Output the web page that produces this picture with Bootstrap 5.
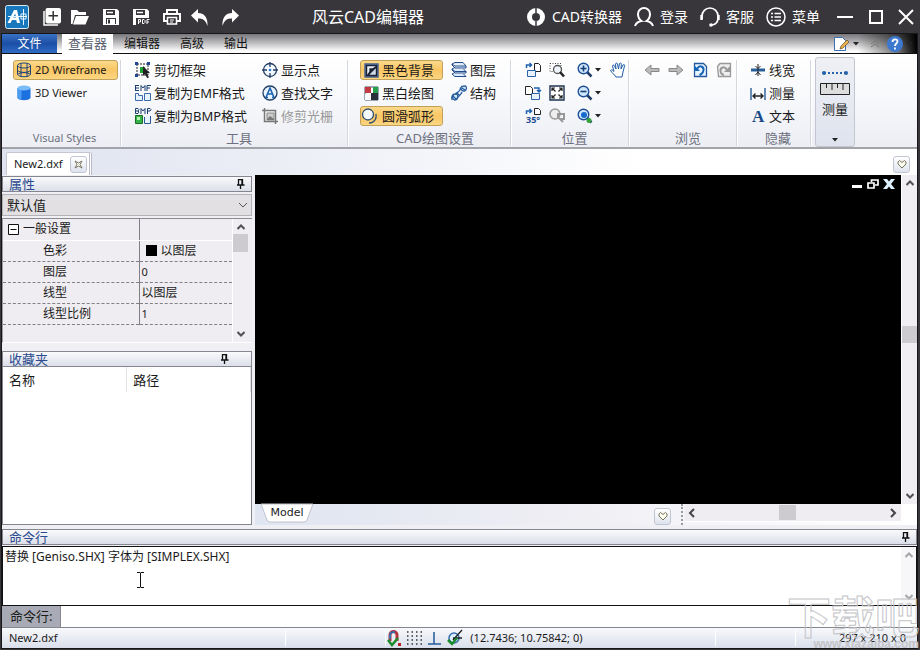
<!DOCTYPE html>
<html lang="zh-CN">
<head>
<meta charset="utf-8">
<meta name="viewport" content="width=device-width, initial-scale=1">
<title>风云CAD编辑器</title>
<link href="https://cdn.jsdelivr.net/npm/bootstrap@5.3.0/dist/css/bootstrap.min.css" rel="stylesheet">
<style>
body{font-family:"Noto Sans","Noto Sans CJK SC",sans-serif;font-size:12px;line-height:16px;color:#1b1b1b;background:#38363b}
button{font:inherit;color:inherit;background:none;border:0;padding:0;display:flex;align-items:center;white-space:nowrap}
svg{display:block;flex:none;overflow:visible}
.i16{width:16px;height:16px}
.titlebar{height:34px;background:#38363b;color:#fff;font-size:14px;flex:none}
.titlebar .app-name{font-size:16px;line-height:20px;margin-right:29px}
.tool-icons{gap:10px;padding-left:5px}
.account{gap:12px}
.account a{gap:6px;color:#fff;text-decoration:none;line-height:20px;display:flex;align-items:center}
.win{gap:12px;padding-left:17px;padding-right:7px}
.frame{margin:0 3px 2px 2px;background:#f0eff3;outline:1px solid #17171a;min-height:0}
.menu-row{height:20px;background:linear-gradient(#77767a,#fdfdfd 90%);border-bottom:1px solid #111;flex:none}
.menu-row a{color:#111;text-decoration:none;font-size:12px;line-height:20px;display:block}
.menu-row .adv{margin-left:20px}
.menu-row .file-tab{width:55px;background:linear-gradient(#3a72c4,#1c4fa6 50%,#2f6cc5);color:#fff;text-align:center;height:19px;margin-right:5px}
.menu-row .cur{background:#fff;color:#5a5f70;width:51px;text-align:center;height:20px;line-height:19px;font-size:13px;margin-right:11px}
.menu-end{background:linear-gradient(90deg,transparent 55%,#0008 85%,#000)}
.ribbon{background:linear-gradient(#fff,#f7f8fb 50%,#eceef4);border-bottom:2px solid #a3a3aa;height:95px;flex:none;font-size:13px;padding-top:6px}
.grp{border-right:1px solid #d5d7df;box-shadow:1px 0 #fff;flex:none;display:flex;flex-direction:column;height:86px}
.grp-name{margin-top:auto;text-align:center;color:#6d7080;line-height:16px}
.latin,.grp-name.latin{font-size:11px}
.grp-body{display:flex}
.stack{display:flex;flex-direction:column;gap:3px}
.cmd{height:20px;gap:3px;padding:0 3px;border:1px solid transparent;border-radius:3px;line-height:18px}
.cmd.on{background:linear-gradient(#fbd98a,#f9c664 50%,#fcd681);border-color:#c2a05a}
.cmd.off{color:#999}
.wide{width:105px}
.g1{width:119px;padding-left:11px}.g1 .grp-name{margin-right:4px}.g1 .cmd{padding:0 2px}
.g2{width:227px;padding-left:10px}.g2 .stack:first-child{width:127px}
.g3{width:163px;padding-left:12px}
.g4{width:118px;padding-left:10px}
.g4 .cmd{gap:2px}
.g5{width:108px;padding-left:11px}
.g6{width:74px;padding-left:9px}
.measure{width:40px;height:90px;margin:-3px 0 0 4px;background:linear-gradient(#eef0f5,#dfe3ee);border:1px solid #c3c6d0;border-radius:3px;flex-direction:column;padding-top:12px;gap:6px;flex:none}
.docs{height:26px;flex:none;background:linear-gradient(90deg,#dfe3ef,#eef0f7 35%,#fff 70%);padding:3px 7px 0 4px}
.doc-tab{background:#fff;border:1px solid #c4c7d2;border-bottom:0;padding:0 2px 0 7px;border-radius:2px 2px 0 0;width:86px;border-right:3px double #b9bcc8;font-size:11px}
.small-btn{width:17px;height:17px;border:1px solid #c2c6d3;border-radius:3px;background:linear-gradient(#fff,#dde3ee);justify-content:center}
.side{width:250px;flex:none;padding-top:1px}
.pane-head{height:16px;border:1px solid #85868f;background:linear-gradient(#fafafc,#dcdfe9);color:#2a4b8d;line-height:14px;font-size:13px;padding:0 6px;display:flex;align-items:center;justify-content:space-between;flex:none}
.pane-head h2{font:inherit;margin:0}
.default-box{position:relative;height:22px;margin:2px 0;flex:none}
.default-box select{appearance:none;width:100%;height:22px;border:1px solid #b3b3b7;background:#e2e0e3;font-size:13px;line-height:18px;padding:0 4px;color:#1b1b1b;border-radius:0}
.default-box svg{position:absolute;right:4px;top:8px}
.props{height:125px;flex:none;border-left:1px solid #9b9ba0;border-top:1px solid #8a8a90;background:#efedf1;border-bottom:1px solid #fff}
.props table{width:100%;border-collapse:collapse;table-layout:fixed}
.props td,.props th{height:21px;padding:0 0 0 2px;font-weight:400;line-height:18px}
.props th{width:136px;border-right:1px solid #808086;padding-left:40px}
.props tr+tr td,.props tr+tr th{border-bottom:1px dashed #808086}
.props tr:first-child th,.props tr:first-child td{border-bottom:1px solid #fff}
.props tr:first-child th{padding-left:5px}
.vbar{width:16px;background:#f0eef2;flex:none;display:flex;flex-direction:column;align-items:center;padding:5px 0;border-left:1px solid #fff;color:#505055}
.thumb{background:#cdcbd0}
.thumb.side-t{width:15px;height:18px}
.thumb.doc-t{width:15px;height:17px;margin-bottom:11px}
.thumb.sheet-t{width:17px;height:15px;margin-right:10px}
.fav{flex:1;background:#fff;border:1px solid #85868f;border-top:0;min-height:0}
.fav table{width:100%;table-layout:fixed;font-size:13px}
.fav th{font-weight:400;height:25px;padding:0 6px;border-right:1px solid #e2e2e6}
.work{min-height:0}
.doc-area{margin-left:3px;min-width:0}
.canvas-area{background:#000;color:#fff}
.canvas-ctl{gap:4px;padding:4px 6px}
.sheet-row{height:21px;flex:none;background:linear-gradient(90deg,#dfe5f1,#f0eff4 50%,#fff);padding-right:16px}
.model{font-family:"DejaVu Sans",sans-serif;font-size:11px;width:52px;height:18px;position:relative;justify-content:center;margin-left:6px;line-height:16px}
.model svg{position:absolute;left:0;top:0}
.model span{position:relative}
.hbar{width:216px;height:18px;background:#efedf1;padding:0 4px 0 3px;border-bottom:1px solid #fff}
.grip{border-left:2px dotted #9a9aa2;margin:0 2px 0 10px;height:21px}
.log{height:60px;border:1px solid #111;background:#fff;flex:none;position:relative;margin-top:1px}
.log p{margin:0;padding:1px 2px;line-height:18px}
.ibeam{position:absolute;left:134px;top:25px}
.cmdline{height:22px;flex:none;background:#fff;border-bottom:1px solid #85868f}
.cmdline label{background:#a8abb5;width:59px;line-height:21px;padding-left:8px;font-size:13px;border-right:1px solid #85868f}
.cmdline input{border:0;flex:1;min-width:0;outline:0;padding:0 4px}
.status{height:20px;flex:none;background:linear-gradient(#f8f9fb,#d9dfeb);font-size:11px;padding:0 11px 0 7px}
.status .cell{border-left:1px solid #fff;height:16px}
.c1{flex:277 1 0}.c2{flex:100 1 0}.c3{flex:330 1 0}.c4{flex:80 1 0}.c5{flex:110 1 0}
.watermark{position:absolute;right:1px;bottom:0;text-align:right;pointer-events:none;color:transparent;width:136px}
.watermark b{display:block;font-size:44px;line-height:46px;font-weight:700;-webkit-text-stroke:1px #c4c4c8;font-family:"Noto Sans CJK SC",sans-serif;white-space:nowrap}
.watermark i{display:block;font-style:normal;font-weight:700;font-family:"Liberation Sans",sans-serif;font-size:12px;line-height:12px;color:#c4c4c8}
</style>
<script src="https://cdn.jsdelivr.net/npm/bootstrap@5.3.0/dist/js/bootstrap.bundle.min.js"></script>
</head>
<body class="vh-100 d-flex flex-column overflow-hidden position-relative">
<svg width="0" height="0" class="position-absolute">
<defs>
<symbol id="pin" viewBox="0 0 8 10"><path d="M1.500 5.500V.5h4v5M5 0v6M0 6h7.500M3.500 6v4" fill="none" stroke="#111" stroke-width="1.300"/></symbol>
<symbol id="up" viewBox="0 0 8 6"><path d="M.5 5 4 1.500 7.500 5" fill="none" stroke="currentColor" stroke-width="2"/></symbol>
<symbol id="down" viewBox="0 0 8 6"><path d="M.5 1 4 4.500 7.500 1" fill="none" stroke="currentColor" stroke-width="2"/></symbol>
<symbol id="heart" viewBox="0 0 10 9"><path d="M5 8 1 4V2l1.500-1.500L5 2.500 7.500.5 9 2v2z" fill="#fffef2" stroke="#77755c"/></symbol>
<symbol id="caret" viewBox="0 0 6 4"><path d="M0 0h6L3 3.500z" fill="#222"/></symbol>
<symbol id="lens" viewBox="0 0 16 16"><path d="m10 10 4.500 4.500" stroke="#1f3b66" stroke-width="2.500"/><circle cx="6.500" cy="6.500" r="5.300" fill="#cfe6fb" stroke="#1e4f96" stroke-width="1.400"/></symbol>
</defs>
</svg>

<header class="titlebar d-flex align-items-center justify-content-between">
  <div class="tool-icons d-flex align-items-center">
    <svg width="24" height="24" viewBox="0 0 24 24"><rect x=".5" y=".5" width="23" height="23" rx="2" fill="#1878bd" stroke="#d7edfa"/><path fill-rule="evenodd" d="M2.500 18 9 5h3l3 13h-3l-.7-3H7l-1.500 3zM8 12.500h3l-.8-4z" fill="#fff"/><path d="M3 11.500h19M18.500 4v16M16 9h5v5h-5z" fill="none" stroke="#e6f6ff"/></svg>
    <button type="button" aria-label="新建" class="ms-1"><svg width="18" height="18" viewBox="0 0 18 18"><path d="M1 3v14h14" fill="none" stroke="#fff" stroke-width="1.500"/><rect x="2.500" y="0" width="15.500" height="15.500" rx="2" fill="#fff"/><path d="M10.200 3v9.500M5.500 7.700H15" stroke="#333" stroke-width="1.500"/></svg></button>
    <button type="button" aria-label="打开"><svg width="18" height="16" viewBox="0 0 18 16"><path d="M0 15V1h6l2 2h7v3H4L1.500 15z" fill="#fff"/><path d="M5 7h13l-3.500 8.500H2z" fill="#fff"/></svg></button>
    <button type="button" aria-label="保存" class="ms-1"><svg class="i16" viewBox="0 0 16 16"><path d="M0 0h14l2 2v14H0z" fill="#fff"/><path d="M3 1h9v5H3zM3 9h10v6H3z" fill="#38363b"/><path d="M4 3.500h6" stroke="#fff" stroke-width="1.500"/><path d="M4 10h8v5H4z" fill="#fff"/><path d="M6 10.500v4" stroke="#38363b" stroke-width="2"/></svg></button>
    <button type="button" aria-label="导出PDF" class="ms-1"><svg class="i16" viewBox="0 0 16 16"><path d="M0 0h14l2 2v14H0z" fill="#fff"/><path d="M3 1h9v5H3zM3 9h13v7H3z" fill="#38363b"/><path d="M4 3.500h6" stroke="#fff" stroke-width="1.500"/><path d="M5.500 15v-4.500h2v2.500h-2M9.500 14.500v-4h1.500l1 1v2l-1 1zM14 15v-4.500h2.500M14 13h2" fill="none" stroke="#fff"/></svg></button>
    <button type="button" aria-label="打印" class="ms-1"><svg width="18" height="16" viewBox="0 0 18 16"><path d="M4 4V1h10v3M4 12H1V5h16v7h-3" fill="none" stroke="#fff" stroke-width="2"/><path d="M4.500 8.500h9v6.500h-9z" fill="#38363b" stroke="#fff" stroke-width="1.500"/><path d="M7 11h4M7 13h3" stroke="#fff"/></svg></button>
    <button type="button" aria-label="撤销"><svg width="17" height="17" viewBox="0 0 17 17"><path d="M0 6.500 7 0v4c6 0 10 4 9.500 13C14.500 11 12 9.500 7 9.500v4z" fill="#fff"/></svg></button>
    <button type="button" aria-label="重做" class="ms-1"><svg width="17" height="17" viewBox="0 0 17 17"><path d="M17 6.500 10 0v4C4 4 0 8 .5 17 2.500 11 5 9.500 10 9.500v4z" fill="#fff"/></svg></button>
  </div>
  <div class="app-name">风云CAD编辑器</div>
  <div class="d-flex align-items-center">
    <nav class="account d-flex">
      <a href="#"><svg width="20" height="20" viewBox="0 0 20 20"><circle cx="10" cy="10" r="6.500" fill="none" stroke="#fff" stroke-width="5"/><path d="M10 0v6M10 14v6" stroke="#38363b" stroke-width="1.500"/></svg>CAD转换器</a>
      <a href="#"><svg width="20" height="20" viewBox="0 0 20 20"><path d="M1 19c1-3 3-4.500 6.500-5C4.500 12 4 9.500 4 7a6 6 0 0 1 12 0c0 2.500-.5 5-3.500 7 3.500.5 5.500 2 6.500 5" fill="none" stroke="#fff" stroke-width="2"/></svg>登录</a>
      <a href="#"><svg width="20" height="20" viewBox="0 0 20 20"><path d="M2 12V9a8 8 0 0 1 16 0v3M18 11c0 4-2 6.500-6 7" fill="none" stroke="#fff" stroke-width="1.700"/><path d="M1.500 8v5M18.500 8v5" stroke="#fff" stroke-width="2.500"/><circle cx="11" cy="18" r="1.800" fill="#fff"/></svg>客服</a>
      <a href="#"><svg width="20" height="20" viewBox="0 0 20 20"><circle cx="10" cy="10" r="9" fill="none" stroke="#fff" stroke-width="1.500"/><path d="M5 6.500h2M5 10h2M5 13.500h2M8.500 6.500H15M8.500 10H15M8.500 13.500H15" stroke="#fff" stroke-width="1.600"/></svg>菜单</a>
    </nav>
    <div class="win d-flex align-items-center">
      <button type="button" aria-label="最小化"><svg class="i16" viewBox="0 0 16 16"><path d="M0 8h16" stroke="#fff" stroke-width="2"/></svg></button>
      <button type="button" aria-label="最大化" class="ms-1"><svg width="14" height="14" viewBox="0 0 14 14"><path d="M1 1h12v12H1z" fill="none" stroke="#fff" stroke-width="2"/></svg></button>
      <button type="button" aria-label="关闭" class="ms-1"><svg width="14" height="14" viewBox="0 0 14 14"><path d="m0 0 14 14M14 0 0 14" stroke="#fff" stroke-width="2"/></svg></button>
    </div>
  </div>
</header>

<main class="frame flex-grow-1 d-flex flex-column">
  <nav class="menu-row d-flex justify-content-between">
    <div class="d-flex">
      <a href="#" class="file-tab">文件</a>
      <a href="#" class="cur">查看器</a>
      <a href="#">编辑器</a>
      <a href="#" class="adv">高级</a>
      <a href="#" class="adv">输出</a>
    </div>
    <div class="menu-end d-flex align-items-center ps-5 pe-1 gap-1">
      <button type="button" aria-label="样式"><svg class="i16" viewBox="0 0 16 16"><path d="M1.500 1.500h8l3 3v10h-11z" fill="#fff" stroke="#3c6fb6"/><path d="m7 13 1-3 6-6 2 2-6 6z" fill="#e9b44c" stroke="#5e4a21" stroke-width=".7"/></svg></button>
      <svg width="6" height="4"><use href="#caret"/></svg>
      <svg width="8" height="8" viewBox="0 0 8 8" class="ms-2 me-1"><path d="m0 4 4-3 4 3M0 7l4-3 4 3" fill="none" stroke="#777"/></svg>
      <button type="button" aria-label="帮助"><svg class="i16" viewBox="0 0 16 16"><circle cx="8" cy="8" r="8" fill="#3d78cf"/><path d="M5.500 6c0-3.500 5-3.500 5-.5C10.500 7.500 8 7.500 8 10M8 11.500v2" fill="none" stroke="#fff" stroke-width="1.800"/></svg></button>
      <svg width="6" height="4"><use href="#caret"/></svg>
    </div>
  </nav>

  <section class="ribbon d-flex">
    <div class="grp g1">
      <div class="grp-body"><div class="stack latin">
        <button type="button" class="cmd on wide"><svg class="i16" viewBox="0 0 16 16"><ellipse cx="8" cy="3.500" rx="6.500" ry="2.500" fill="none" stroke="#1e4377"/><path d="M1.500 3.500v9c2 3 11 3 13 0v-9M1.500 8.500c2 2.500 11 2.500 13 0M1.500 12.500c3-2.500 10-2.500 13 0M5 1v14M11 1v14" fill="none" stroke="#1e4377"/></svg>2D Wireframe</button>
        <button type="button" class="cmd"><svg class="i16" viewBox="0 0 16 16"><path d="M1.500 3v10c2 3 11 3 13 0V3z" fill="#1d70df"/><path d="M1.500 3v10c1 1 2 1.500 4 2V3z" fill="#4b9bf2"/><ellipse cx="8" cy="3" rx="6.500" ry="2.500" fill="#7bbcf8"/></svg>3D Viewer</button>
      </div></div>
      <div class="grp-name latin">Visual Styles</div>
    </div>
    <div class="grp g2">
      <div class="grp-body">
        <div class="stack">
          <button type="button" class="cmd"><svg class="i16" viewBox="0 0 16 16"><path d="M2 2h11v11H2z" fill="none" stroke="#222" stroke-dasharray="2 1"/><path d="M0 0h3v3H0zM12 0h3v3h-3zM0 12h3v3H0z" fill="#1d4796"/><path d="M5 5h5v6H5z" fill="#1fa332"/><path d="m8 4 7 7-3 .5 2 4-2 .5-2-4-2 2z" fill="#222"/></svg>剪切框架</button>
          <button type="button" class="cmd"><svg class="i16" viewBox="0 0 16 16"><path d="M.5 8.500h3v2h4v5h-7zM9.500 8.500h6v7h-6z" fill="#e6f3ff" stroke="#3b6ba8"/><path d="M.5 0v6M.5.500H4M.5 3H4M.5 5.500H4M6 6V.5L8 3l2-2.500V6M12 6V.5h4M12 3h3" fill="none" stroke="#1b3f70"/></svg>复制为EMF格式</button>
          <button type="button" class="cmd"><svg class="i16" viewBox="0 0 16 16"><path d="M.5 7.500h7v8h-7z" fill="#35b545" stroke="#176b27"/><path d="M2 9h3v3H2z" fill="#b5f0b0"/><path d="M9.500 9v6.500h6V8" fill="#e6f3ff" stroke="#2a5794"/><path d="M.5 5.500v-5H3l1 1-1 1.500H.5M3 3l1 1-1 1.500H.5M6 6V.5L8 3l2-2.500V6M12.500 6V.5H15l1 1-1 1.500h-2.500" fill="none" stroke="#1b3f70"/></svg>复制为BMP格式</button>
        </div>
        <div class="stack">
          <button type="button" class="cmd"><svg class="i16" viewBox="0 0 16 16"><circle cx="8" cy="8" r="6.500" fill="#f4faff" stroke="#243f63" stroke-width="1.300"/><path d="M8 0v5M8 11v5M0 8h5M11 8h5" stroke="#243f63" stroke-width="1.300"/><circle cx="8" cy="8" r="1.300" fill="#247acf"/></svg>显示点</button>
          <button type="button" class="cmd"><svg class="i16" viewBox="0 0 16 16"><circle cx="8" cy="8" r="7" fill="#eaf4ff" stroke="#243f63" stroke-width="1.300"/><path d="M4 12.500 8 3l4 9.500M5.500 9h5M3 12.500h3M10 12.500h3" fill="none" stroke="#1c62ad" stroke-width="1.600"/></svg>查找文字</button>
          <button type="button" class="cmd off"><svg class="i16" viewBox="0 0 16 16"><path d="M2.500 0v13.500H16M0 2.500h13.500V16" fill="none" stroke="#777" stroke-width="1.500"/><path d="M5 5h7v7H5z" fill="#ccc" stroke="#888"/><path d="m5 11 3-3 4 3v1H5z" fill="#777"/></svg>修剪光栅</button>
        </div>
      </div>
      <div class="grp-name">工具</div>
    </div>
    <div class="grp g3">
      <div class="grp-body gap-1">
        <div class="stack">
          <button type="button" class="cmd on pe-2"><svg width="15" height="15" viewBox="0 0 14 14"><path d="M1 1h12v12H1z" fill="#1a2233" stroke="#47618e" stroke-width="1.500"/><path d="M3 11V3h8L8 5H5v3z" fill="#eaf0f8"/><path d="M5 11h6V5z" fill="#cdd9e8"/></svg>黑色背景</button>
          <button type="button" class="cmd"><svg width="15" height="15" viewBox="0 0 15 15"><path d="M1 1h13v13H1z" fill="#fff" stroke="#44546e"/><path d="M1 1h6v6H1z" fill="#c33a44"/><path d="M7 7h7v7H7z" fill="#2a2f3a"/><path d="M1 8h6v6H1z" fill="#fafafa"/><path d="M9 1h5v6H9z" fill="#29a04c"/></svg>黑白绘图</button>
          <button type="button" class="cmd on ps-0 pe-2"><svg width="18" height="16" viewBox="0 0 18 16"><circle cx="7" cy="6.500" r="5.500" fill="#f4faff" stroke="#34516f" stroke-width="1.300"/><path d="M15 6c1 5-2 9-7 9" fill="none" stroke="#34516f" stroke-width="1.300"/></svg>圆滑弧形</button>
        </div>
        <div class="stack">
          <button type="button" class="cmd"><svg class="i16" viewBox="0 0 16 16"><path d="m1 2 3-1.500h8L15 4H4zM1 7l3-1.500M1 7l3 2.500h11L12.500 7M1 12l3-1.500M1 12l3 2.500h11L12.500 12M1 2v1l3 3h11V4M1 7v1l3 3h11V9.500" fill="#dcecff" stroke="#234a87"/></svg>图层</button>
          <button type="button" class="cmd"><svg class="i16" viewBox="0 0 16 16"><path d="M1 15c-1-5 1-6 4-6s2 6-1 6-3-5 0-6c3-2 4-2 5-4 0-3 3-4 5-4s2 5-1 5-4-3-2-5" fill="#dbeafc" stroke="#285f9f" stroke-width="1.300"/><path d="M5 15c2-4 5-5 6-8M2 11l3 3M11 3l3 2M6 8l3 3" fill="none" stroke="#285f9f" stroke-width="1.300"/></svg>结构</button>
        </div>
      </div>
      <div class="grp-name">CAD绘图设置</div>
    </div>
    <div class="grp g4">
      <div class="grp-body">
        <div class="stack">
          <button type="button" class="cmd" aria-label="上一视图"><svg class="i16" viewBox="0 0 16 16"><path d="M9.500 1.500h4l2 2v6h-6z" fill="#fff" stroke="#222"/><path d="M2.500 8.500h8v6h-8z" fill="#e8f2ff" stroke="#2b62a8"/><path d="M1.500 6V3h5M4.500 1l2 2-2 2" fill="none" stroke="#1f61b0" stroke-width="1.500"/></svg></button>
          <button type="button" class="cmd" aria-label="下一视图"><svg class="i16" viewBox="0 0 16 16"><path d="M.5 1.500h5l2 2v6h-7z" fill="#fff" stroke="#222"/><path d="M6.500 8.500h8v6h-8z" fill="#e8f2ff" stroke="#2b62a8"/><path d="M9 3h5v4M12 5l2 2 2-2" fill="none" stroke="#1f61b0" stroke-width="1.400"/></svg></button>
          <button type="button" class="cmd" aria-label="旋转35度"><svg class="i16" viewBox="0 0 16 16"><path d="M9.500.5h4l2 2v4h-6z" fill="#fff" stroke="#222"/><path d="M1.500 6V3h5M4.500 1l2 2-2 2" fill="none" stroke="#1f61b0" stroke-width="1.500"/><text x="1" y="15" font-size="9" font-weight="700" fill="#234f90">35°</text></svg></button>
        </div>
        <div class="stack">
          <button type="button" class="cmd" aria-label="窗口缩放"><svg class="i16" viewBox="0 0 16 16"><path d="M1 1.500h11v8H1z" fill="none" stroke="#444" stroke-dasharray="1 1.500"/><circle cx="8.500" cy="7.500" r="4" fill="#eef5fc" stroke="#555" stroke-width="1.300"/><path d="m11 10 4 4.500" stroke="#222" stroke-width="2.500"/></svg></button>
          <button type="button" class="cmd" aria-label="适合窗口"><svg class="i16" viewBox="0 0 16 16"><path d="M1 1h14v14H1z" fill="#fff" stroke="#1d3350" stroke-width="1.400"/><path d="m3 3 3.500 3.500M13 3 9.500 6.500M3 13l3.500-3.500M13 13 9.500 9.500M3 6V3h3M10 3h3v3M3 10v3h3M10 13h3v-3" fill="none" stroke="#222" stroke-width="1.200"/></svg></button>
          <button type="button" class="cmd off" aria-label="还原缩放"><svg class="i16" viewBox="0 0 16 16"><circle cx="6" cy="6" r="5" fill="#eee" stroke="#999" stroke-width="1.500"/><path d="m10 10 4 4M9 11V6h6v5h-3" fill="none" stroke="#999" stroke-width="2"/></svg></button>
        </div>
        <div class="stack ms-1">
          <button type="button" class="cmd pe-0" aria-label="放大"><svg class="i16" viewBox="0 0 16 16"><use href="#lens"/><path d="M3.500 6.500h6M6.500 3.500v6" stroke="#173d75" stroke-width="1.600"/></svg><svg width="6" height="4"><use href="#caret"/></svg></button>
          <button type="button" class="cmd pe-0" aria-label="缩小"><svg class="i16" viewBox="0 0 16 16"><use href="#lens"/><path d="M3.500 6.500h6" stroke="#173d75" stroke-width="1.600"/></svg><svg width="6" height="4"><use href="#caret"/></svg></button>
          <button type="button" class="cmd pe-0" aria-label="动态缩放"><svg class="i16" viewBox="0 0 16 16"><use href="#lens"/><circle cx="7" cy="7" r="3" fill="#186bcb"/><circle cx="12" cy="12.500" r="2.500" fill="#35a23b"/></svg><svg width="6" height="4"><use href="#caret"/></svg></button>
        </div>
        <div class="stack ms-1">
          <button type="button" class="cmd" aria-label="平移"><svg class="i16" viewBox="0 0 16 16"><path d="M6 15C4 12 2 11 .5 8.500c1-1.500 2.500 0 3.500 1L2.500 4c.5-1.500 1.500-1 2 0L6 7 5.500 2c.5-1.500 2-1 2 0L8.500 7 9.500 1.500c1-1 2-.5 1.800 1L11 7l2-4c1-1 2 0 1.500 1L13 10l-1 5z" fill="#fff" stroke="#1f5da7"/></svg></button>
        </div>
      </div>
      <div class="grp-name">位置</div>
    </div>
    <div class="grp g5">
      <div class="grp-body">
        <button type="button" class="cmd" aria-label="后退"><svg class="i16" viewBox="0 0 16 16"><path d="M1 8 7 3v3.500h8v3H7V13z" fill="#bbb" stroke="#888"/></svg></button>
        <button type="button" class="cmd" aria-label="前进"><svg class="i16" viewBox="0 0 16 16"><path d="M15 8 9 3v3.500H1v3h8V13z" fill="#bbb" stroke="#888"/></svg></button>
        <button type="button" class="cmd" aria-label="撤销"><svg class="i16" viewBox="0 0 16 16"><path d="M2.500 1.500h9l3 3v10h-12z" fill="#eaf4ff" stroke="#245a9b" stroke-width="1.300"/><path d="M2 3v6h6z" fill="#1764b6"/><path d="M5 7c3-5 8-2 6 3-1 2-2 2.500-3.500 3" fill="none" stroke="#1764b6" stroke-width="2"/></svg></button>
        <button type="button" class="cmd" aria-label="重做"><svg class="i16" viewBox="0 0 16 16"><path d="M1.500 4.500 4 1.500h10.500v13h-12z" fill="#eee" stroke="#999" stroke-width="1.300"/><path d="M14 4v6H8z" fill="#999"/><path d="M11 8c-3-5-8-2-6 3 1 1 2 2 3 2" fill="none" stroke="#999" stroke-width="2"/></svg></button>
      </div>
      <div class="grp-name">浏览</div>
    </div>
    <div class="grp g6">
      <div class="grp-body"><div class="stack">
        <button type="button" class="cmd"><svg class="i16" viewBox="0 0 16 16"><path d="M1 8h14" stroke="#285f99" stroke-width="3"/><path d="M8 2v12M5.500 4 8 6.500 10.500 4M5.500 13 8 10l2.500 3" fill="none" stroke="#222"/></svg>线宽</button>
        <button type="button" class="cmd"><svg class="i16" viewBox="0 0 16 16"><path d="M1 3v12M15 3v12" stroke="#285f99" stroke-width="1.400"/><path d="M3 11h10M5.500 8.500 3 11l2.500 2.500M10.500 8.500 13 11l-2.500 2.500" fill="none" stroke="#222" stroke-width="1.400"/></svg>测量</button>
        <button type="button" class="cmd"><svg class="i16" viewBox="0 0 16 16"><text x="2" y="14" font-family="Liberation Serif,serif" font-weight="700" font-size="17" fill="#174988">A</text></svg>文本</button>
      </div></div>
      <div class="grp-name">隐藏</div>
    </div>
    <button type="button" class="measure"><svg width="28" height="6" viewBox="0 0 28 6"><path d="M3 3h22" stroke="#2263ac" stroke-width="2" stroke-dasharray="2 2"/><circle cx="3" cy="3" r="2" fill="#2263ac"/><circle cx="25" cy="3" r="2" fill="#2263ac"/></svg><svg width="30" height="13" viewBox="0 0 30 13"><path d="M.5 1.500h29v11H.5z" fill="#ddd" stroke="#222"/><path d="M6.500 1v5M12 1v7M17.500 1v5M23 1v7" stroke="#222"/></svg><span>测量</span><svg width="6" height="4" class="mt-auto mb-1"><use href="#caret"/></svg></button>
  </section>

  <div class="docs d-flex justify-content-between">
    <div class="doc-tab d-flex align-items-center justify-content-between">New2.dxf<button type="button" class="small-btn" aria-label="关闭文档"><svg width="9" height="9" viewBox="0 0 9 9"><path d="M1 1 4.500 3 8 1 6 4.500 8 8 4.500 6 1 8l2-3.500z" fill="#fffef2" stroke="#77755c"/></svg></button></div>
    <button type="button" class="small-btn mt-1" aria-label="文档列表"><svg width="10" height="9"><use href="#heart"/></svg></button>
  </div>

  <div class="work d-flex flex-grow-1">
    <aside class="side d-flex flex-column">
      <div class="pane-head"><h2>属性</h2><svg width="8" height="10"><use href="#pin"/></svg></div>
      <div class="default-box"><select aria-label="默认值"><option>默认值</option></select><svg width="10" height="6" viewBox="0 0 10 6"><path d="m1 1 4 4 4-4" fill="none" stroke="#555"/></svg></div>
      <div class="props d-flex">
        <div class="flex-grow-1">
          <table>
            <tr><th><span class="d-flex align-items-center gap-1"><svg width="11" height="11" viewBox="0 0 11 11"><path d="M.5.5h10v10H.5zM2.500 5.500h6" fill="#fff" stroke="#111"/></svg>一般设置</span></th><td></td></tr>
            <tr><th>色彩</th><td><span class="d-flex align-items-center gap-1 ms-1"><svg width="11" height="11"><rect width="11" height="11"/></svg>以图层</span></td></tr>
            <tr><th>图层</th><td class="latin">0</td></tr>
            <tr><th>线型</th><td>以图层</td></tr>
            <tr><th>线型比例</th><td class="latin">1</td></tr>
          </table>
        </div>
        <div class="vbar me-1"><svg width="8" height="6"><use href="#up"/></svg><div class="thumb side-t mt-1"></div><svg width="8" height="6" class="mt-auto"><use href="#down"/></svg></div>
      </div>
      <div class="pane-head mt-2"><h2>收藏夹</h2><svg width="8" height="10" class="me-3"><use href="#pin"/></svg></div>
      <div class="fav"><table><tr><th>名称</th><th>路径</th></tr></table></div>
    </aside>
    <section class="doc-area flex-grow-1 d-flex flex-column">
      <div class="d-flex flex-grow-1">
        <div class="canvas-area flex-grow-1 d-flex justify-content-end align-items-start">
          <div class="canvas-ctl d-flex">
            <button type="button" aria-label="最小化图纸"><svg width="12" height="10" viewBox="0 0 12 10"><path d="M1 6h10v3H1z" fill="#fff"/></svg></button>
            <button type="button" aria-label="还原图纸"><svg width="12" height="10" viewBox="0 0 12 10"><path d="M4.500 3V1H11v5H8M1 4h6v5H1z" fill="none" stroke="#fff" stroke-width="1.700"/></svg></button>
            <button type="button" aria-label="关闭图纸"><svg width="12" height="10" viewBox="0 0 12 10"><path d="M0 0h4l2 2.500L8 0h4L8 5l4 5H8L6 7.500 4 10H0l4-5z" fill="#dff2ff"/></svg></button>
          </div>
        </div>
        <div class="vbar"><svg width="8" height="6"><use href="#up"/></svg><div class="flex-grow-1"></div><div class="thumb doc-t"></div><div class="flex-grow-1"></div><svg width="8" height="6"><use href="#down"/></svg></div>
      </div>
      <div class="sheet-row d-flex justify-content-between">
        <button type="button" class="model"><svg width="52" height="19" viewBox="0 0 52 19"><path d="M0 0h52l-6 16q-1 2-3 2H9q-2 0-3-2z" fill="#fff" stroke="#c0c3cc"/></svg><span>Model</span></button>
        <div class="d-flex">
          <button type="button" class="small-btn mt-1" aria-label="布局列表"><svg width="10" height="9"><use href="#heart"/></svg></button>
          <div class="grip"></div>
          <div class="hbar d-flex align-items-center justify-content-between">
            <svg width="8" height="8" viewBox="0 0 8 8"><path d="M6 0 2 4l4 4" fill="none" stroke="#444" stroke-width="2"/></svg>
            <div class="thumb sheet-t"></div>
            <svg width="8" height="8" viewBox="0 0 8 8"><path d="m2 0 4 4-4 4" fill="none" stroke="#444" stroke-width="2"/></svg>
          </div>
        </div>
      </div>
    </section>
  </div>

  <div class="pane-head mt-1"><h2>命令行</h2><svg width="8" height="10"><use href="#pin"/></svg></div>
  <div class="log d-flex justify-content-between">
    <p>替换 [Geniso.SHX] 字体为 [SIMPLEX.SHX]</p>
    <svg class="ibeam" width="8" height="16" viewBox="0 0 8 16"><path d="M0 .5h3l.500.500.500-.5h3M3.500 1v14M0 15.500h3l.500-.5.500.5h3" fill="none" stroke="#111"/></svg>
    <div class="vbar opacity-50"><svg width="8" height="6"><use href="#up"/></svg><svg width="8" height="6" class="mt-auto"><use href="#down"/></svg></div>
  </div>
  <div class="cmdline d-flex"><label for="cmd">命令行:</label><input id="cmd" type="text"></div>
  <footer class="status d-flex align-items-center">
    <div class="c1">New2.dxf</div>
    <div class="cell c2"></div>
    <div class="cell c3 d-flex align-items-center gap-1">
      <svg class="i16" viewBox="0 0 16 16"><path d="M4 11V5a3.500 3.500 0 0 1 7 0v6" fill="none" stroke="#b4343c" stroke-width="3"/><path d="M4 9V4.500a3.500 3.500 0 0 1 5-2" fill="none" stroke="#3a6cae" stroke-width="2"/><path d="m2 10 4 5 6-7" fill="none" stroke="#1c8b2c" stroke-width="2.500"/><path d="M12 13h3v3h-3z" fill="#b22"/></svg>
      <svg class="i16" viewBox="0 0 16 16"><path d="M1 2h15M1 6h15M1 10h15M1 14h15" stroke="#333" stroke-width="1.500" stroke-dasharray="1.500 3"/></svg>
      <svg class="i16" viewBox="0 0 16 16"><path d="M8 2v12M2 14h13" stroke="#225b9b" stroke-width="1.500"/></svg>
      <svg class="i16" viewBox="0 0 16 16"><circle cx="8" cy="8" r="5" fill="#def" stroke="#346fae" stroke-width="1.500"/><path d="M16 0 7 10M7 8h9" stroke="#222" stroke-width="1.300"/><path d="m2 10 4 4 5-6" fill="none" stroke="#1c8b2c" stroke-width="2.500"/></svg>
      <span class="ms-1 text-nowrap">(12.7436; 10.75842; 0)</span>
    </div>
    <div class="cell c4"></div>
    <div class="cell c5 text-end text-nowrap">297 x 210 x 0</div>
  </footer>
</main>
<div class="watermark"><b>下载吧</b><i>www.xiazaiba.com</i></div>
</body>
</html>
